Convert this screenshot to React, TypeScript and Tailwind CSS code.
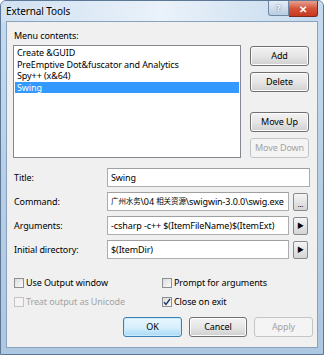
import React from "react";

const font = { fontFamily: '"Noto Sans", "Noto Sans CJK SC", sans-serif', letterSpacing: "-0.1px" };

function Btn({
  label,
  disabled,
  primary,
  className = "",
}: {
  label: string;
  disabled?: boolean;
  primary?: boolean;
  className?: string;
}) {
  if (disabled) {
    return (
      <div
        className={`flex items-center justify-center rounded-[3px] border border-[#c2c5c8] bg-[#f4f4f4] text-[9px] text-[#a3a3a3] ${className}`}
      >
        {label}
      </div>
    );
  }
  return (
    <div
      className={`flex items-center justify-center rounded-[3px] border text-[9px] text-black ${
        primary
          ? "border-[#3c7fb1] bg-gradient-to-b from-[#eaf6fd] via-[#d9f0fc] to-[#a7d9f5] shadow-[inset_0_0_0_1px_#c8eafc]"
          : "border-[#707070] bg-gradient-to-b from-[#f2f2f2] via-[#e6e6e6] to-[#cfcfcf] shadow-[inset_0_0_0_1px_#fcfcfc]"
      } ${className}`}
    >
      {label}
    </div>
  );
}

function SmallBtn({ children }: { children: React.ReactNode }) {
  return (
    <div className="ml-[4px] flex h-[18px] w-[15px] items-center justify-center rounded-[2px] border border-[#8a8a8a] bg-gradient-to-b from-[#f5f5f5] to-[#d4d4d4] text-[7px] leading-none text-black">
      {children}
    </div>
  );
}

function Field({ children, className = "" }: { children: React.ReactNode; className?: string }) {
  return (
    <div
      className={`flex h-[19px] items-center overflow-hidden whitespace-pre border border-[#abadb3] border-t-[#a0a0a0] bg-white pl-[3px] text-[9px] text-black ${className}`}
    >
      {children}
    </div>
  );
}

function Check({ label, checked, disabled }: { label: string; checked?: boolean; disabled?: boolean }) {
  return (
    <div className={`flex items-center gap-[2px] text-[9px] leading-[12px] ${disabled ? "text-[#a3a3a3]" : "text-black"}`}>
      <div
        className={`flex h-[10px] w-[10px] items-center justify-center border ${
          disabled ? "border-[#c4c4c4] bg-[#f4f4f4]" : "border-[#8e8f8f] bg-gradient-to-br from-[#dcdcdc] to-[#fafafa]"
        }`}
      >
        {checked && (
          <svg width="8" height="8" viewBox="0 0 8 8">
            <path d="M1 4.2 L3 6.5 L7 1" fill="none" stroke="#1e3b6a" strokeWidth="1.4" />
          </svg>
        )}
      </div>
      <span>{label}</span>
    </div>
  );
}

export default function App() {
  const items = ["Create &GUID", "PreEmptive Dot&fuscator and Analytics", "Spy++ (x&64)", "Swing"];
  return (
    <div
      style={font}
      className="flex h-[355px] w-[324px] flex-col overflow-hidden rounded-t-[6px] border border-[#5d7897] bg-gradient-to-b from-[#c6dbef] via-[#b7cfe6] to-[#aec7e0]"
    >
      {/* title bar */}
      <div className="flex h-[21px] shrink-0 items-start bg-gradient-to-r from-[#cfe0f1] via-[#eaf2fa] to-[#c4d9ed] pr-[5px]">
        <div className="pl-[5px] pt-[3px] text-[10px] leading-[14px] text-black [text-shadow:0_0_6px_#ffffff]">
          External Tools
        </div>
        <div className="flex-1" />
        <div className="flex h-[15px] w-[21px] items-center justify-center rounded-bl-[3px] border border-t-0 border-[#6f87a2] bg-gradient-to-b from-[#e4eef8] to-[#b9cde2] text-[9px] font-bold text-white [text-shadow:0_0_2px_#40536b]">
          ?
        </div>
        <div className="flex h-[16px] w-[29px] items-center justify-center rounded-br-[3px] border border-l-0 border-t-0 border-[#7a2a22] bg-gradient-to-b from-[#e7a18f] via-[#d4533a] to-[#c8381f] text-[10px] font-bold leading-none text-white">
          ✕
        </div>
      </div>

      {/* client area */}
      <div className="mx-[6px] flex h-[325px] w-[310px] flex-col bg-[#f0f0f0] shadow-[0_0_0_1px_#8aa1bb]">
        <div className="pl-[7px] pt-[8px] text-[9px] leading-[12px]">Menu contents:</div>
        <div className="mt-[3px] flex pl-[6px]">
          <div className="h-[113px] w-[228px] border border-[#828790] bg-white p-[1px] text-[9px]">
            {items.map((t, i) => (
              <div
                key={t}
                className={`h-[11.5px] whitespace-nowrap pl-[2px] leading-[11.5px] ${
                  i === 3 ? "bg-[#3399ff] text-white" : "text-black"
                }`}
              >
                {t}
              </div>
            ))}
          </div>
          <div className="ml-[9px] flex w-[59px] flex-col pt-[1px]">
            <Btn label="Add" className="h-[20px]" />
            <Btn label="Delete" className="mt-[6px] h-[20px]" />
            <Btn label="Move Up" className="mt-[20px] h-[20px]" />
            <Btn label="Move Down" disabled className="mt-[6px] h-[20px]" />
          </div>
        </div>

        <div className="mt-[10px] flex flex-col gap-[5px] pl-[7px] text-[9px]">
          <div className="flex items-center">
            <div className="w-[93px]">Title:</div>
            <Field className="w-[203px]">Swing</Field>
          </div>
          <div className="flex items-center">
            <div className="w-[93px]">Command:</div>
            <Field className="w-[182px]">
              <span className="text-[7.5px]">广州水务</span>
              <span>{"\\04 "}</span>
              <span className="text-[7.5px]">相关资源</span>
              <span>{"\\swigwin-3.0.0\\swig.exe"}</span>
            </Field>
            <SmallBtn>
              <span className="pt-[5px]">…</span>
            </SmallBtn>
          </div>
          <div className="flex items-center">
            <div className="w-[93px]">Arguments:</div>
            <Field className="w-[182px]">-csharp -c++ $(ItemFileName)$(ItemExt)</Field>
            <SmallBtn>▶</SmallBtn>
          </div>
          <div className="flex items-center">
            <div className="w-[93px]">Initial directory:</div>
            <Field className="w-[182px]">$(ItemDir)</Field>
            <SmallBtn>▶</SmallBtn>
          </div>
        </div>

        <div className="mt-[18px] grid grid-cols-[148px_1fr] gap-y-[7px] pl-[7px]">
          <Check label="Use Output window" />
          <Check label="Prompt for arguments" />
          <Check label="Treat output as Unicode" disabled />
          <Check label="Close on exit" checked />
        </div>

        <div className="mt-[9px] flex justify-end gap-[7px] pr-[4px]">
          <Btn label="OK" primary className="h-[20px] w-[59px]" />
          <Btn label="Cancel" className="h-[20px] w-[58px]" />
          <Btn label="Apply" disabled className="h-[20px] w-[59px]" />
        </div>
      </div>
    </div>
  );
}
